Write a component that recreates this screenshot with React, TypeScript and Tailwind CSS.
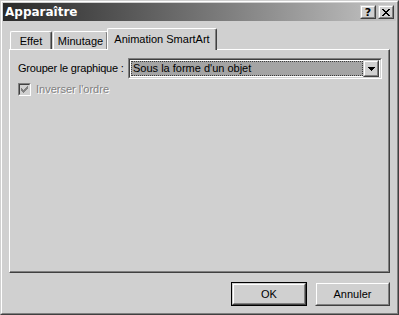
import React from "react";

const face = "bg-[#d0d0d0]";

function CheckGlyph({ color }: { color: string }) {
  // classic 7x7 check mark, one 3px column per x
  return (
    <svg width="7" height="7" viewBox="0 0 7 7" shapeRendering="crispEdges">
      <path
        fill={color}
        d="M0 2h1v3H0zM1 3h1v3H1zM2 4h1v3H2zM3 3h1v3H3zM4 2h1v3H4zM5 1h1v3H5zM6 0h1v3H6z"
      />
    </svg>
  );
}

function CloseGlyph() {
  return (
    <svg width="8" height="7" viewBox="0 0 8 7" shapeRendering="crispEdges">
      <path
        fill="#000"
        d="M0 0h2v1H0zM6 0h2v1H6zM1 1h2v1H1zM5 1h2v1H5zM2 2h4v1H2zM3 3h2v1H3zM2 4h4v1H2zM1 5h2v1H1zM5 5h2v1H5zM0 6h2v1H0zM6 6h2v1H6z"
      />
    </svg>
  );
}

function ArrowDown() {
  return (
    <svg width="7" height="4" viewBox="0 0 7 4" shapeRendering="crispEdges">
      <path fill="#000" d="M0 0h7v1H0zM1 1h5v1H1zM2 2h3v1H2zM3 3h1v1H3z" />
    </svg>
  );
}

// raised 3D box (win2000 style)
function Raised({ className, children }: { className: string; children?: React.ReactNode }) {
  return (
    <div className={`border border-t-[#d0d0d0] border-l-[#d0d0d0] border-r-[#404040] border-b-[#404040] ${className}`}>
      <div className={`h-full w-full border border-t-white border-l-white border-r-[#808080] border-b-[#808080] ${face} flex items-center justify-center`}>
        {children}
      </div>
    </div>
  );
}

function Tab({ label, active, className }: { label: string; active?: boolean; className: string }) {
  return (
    <div
      className={`${className} ${face} border-l border-t border-r border-l-white border-t-white border-r-[#404040] rounded-t-[2px] shadow-[inset_-1px_0_0_#808080] flex justify-center whitespace-nowrap ${
        active ? "relative z-10 -mb-px h-[22px] pt-[4px]" : "h-[18px] pt-[3px]"
      }`}
    >
      <span className="leading-[13px]">{label}</span>
    </div>
  );
}

export default function App() {
  return (
    <div className="w-[399px] h-[315px] bg-[#d0d0d0] border border-t-[#d0d0d0] border-l-[#d0d0d0] border-r-[#404040] border-b-[#404040] font-['Liberation_Sans',Arial,sans-serif] text-[11px] text-black select-none">
      <div className="h-full flex flex-col border border-t-white border-l-white border-r-[#808080] border-b-[#808080] p-px">
        {/* Title bar */}
        <div className="h-[18px] flex items-center pl-[2px] pr-[2px] bg-gradient-to-r from-[#2a2a2a] to-[#c6c6c6]">
          <span className="text-white font-bold text-[12px] leading-none font-['DejaVu_Sans',sans-serif]">Apparaître</span>
          <div className="ml-auto flex gap-[2px]">
            <Raised className="w-[16px] h-[14px]">
              <span className="font-bold text-[11px] leading-none font-['DejaVu_Sans',sans-serif]">?</span>
            </Raised>
            <Raised className="w-[16px] h-[14px]">
              <CloseGlyph />
            </Raised>
          </div>
        </div>

        <div className="flex-1 flex flex-col pl-[6px] pr-[6px] pt-[7px] pb-[6px]">
          {/* Tabs */}
          <div className="flex items-end h-[21px]">
            <Tab label="Effet" className="ml-px w-[42px]" />
            <Tab label="Minutage" className="ml-px w-[55px]" />
            <Tab label="Animation SmartArt" active className="-ml-[1px] w-[110px]" />
          </div>

          {/* Panel */}
          <div className="flex-1 border border-t-white border-l-white border-r-[#404040] border-b-[#404040] shadow-[inset_-1px_-1px_0_#808080] pl-[8px] pt-[8px]">
            <div className="flex items-center">
              <span className="w-[110px] whitespace-nowrap leading-[13px] tracking-[-0.2px]">Grouper le graphique :</span>
              <div className="w-[254px] h-[21px] border border-t-[#808080] border-l-[#808080] border-r-white border-b-white">
                <div className="h-full border border-t-[#404040] border-l-[#404040] border-r-[#d0d0d0] border-b-[#d0d0d0] bg-white flex items-center p-px">
                  <div className="flex-1 h-full bg-[#a4a4a4] border border-dotted border-[#3c3c3c] flex items-center pl-px">
                    <span className="leading-[13px]">Sous la forme d'un objet</span>
                  </div>
                  <Raised className="w-[16px] h-[17px]">
                    <ArrowDown />
                  </Raised>
                </div>
              </div>
            </div>

            <div className="flex items-center mt-[4px]">
              <div className="w-[13px] h-[13px] border border-t-[#808080] border-l-[#808080] border-r-white border-b-white">
                <div className={`h-full border border-t-[#404040] border-l-[#404040] border-r-[#d0d0d0] border-b-[#d0d0d0] ${face} flex items-center justify-center`}>
                  <CheckGlyph color="#808080" />
                </div>
              </div>
              <span className="ml-[5px] leading-[13px] text-[#808080] [text-shadow:1px_1px_0_#ffffff]">Inverser l'ordre</span>
            </div>
          </div>

          {/* Buttons */}
          <div className="flex justify-end gap-[8px] mt-[9px]">
            <div className="border border-black">
              <Raised className="w-[74px] h-[22px]">
                <span className="leading-none">OK</span>
              </Raised>
            </div>
            <Raised className="w-[75px] h-[24px]">
              <span className="leading-none">Annuler</span>
            </Raised>
          </div>
        </div>
      </div>
    </div>
  );
}
